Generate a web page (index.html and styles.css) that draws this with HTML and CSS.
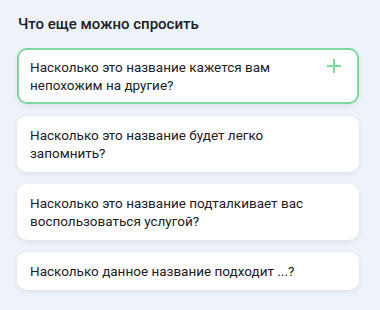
FILE: index.html
```html
<!DOCTYPE html>
<html lang="ru">
<head>
<meta charset="utf-8">
<link rel="stylesheet" href="styles.css">
</head>
<body>
<div class="panel">
  <h2 class="title">Что еще можно спросить</h2>
  <div class="list">
    <div class="card active">
      <span class="text">Насколько это название кажется вам непохожим на другие?</span>
      <svg class="plus" width="14" height="14" viewBox="0 0 14 14"><path d="M7 0v14M0 7h14" stroke="#7dd89b" stroke-width="2" fill="none"/></svg>
    </div>
    <div class="card"><span class="text">Насколько это название будет легко запомнить?</span></div>
    <div class="card"><span class="text">Насколько это название подталкивает вас воспользоваться услугой?</span></div>
    <div class="card"><span class="text">Насколько данное название подходит ...?</span></div>
  </div>
</div>
</body>
</html>
```
FILE: styles.css
```css
html, body {
  margin: 0;
  padding: 0;
  background: #eef2f9;
}
.panel {
  width: 380px;
  height: 310px;
  box-sizing: border-box;
  padding: 15px 21px 0 17px;
  font-family: Roboto, "Noto Sans", sans-serif;
  color: #21201f;
}
.title {
  margin: 0 0 14px 1px;
  font-size: 15px;
  font-weight: 500;
  line-height: 19px;
}
.list {
  display: flex;
  flex-direction: column;
  gap: 12px;
}
.card {
  position: relative;
  background: #fff;
  border-radius: 10px;
  box-shadow: 0 2px 5px rgba(0, 20, 60, 0.08);
  padding: 10px 50px 10px 13px;
  font-size: 13.5px;
  line-height: 18px;
}
.card.active {
  border: 2px solid #7dd89b;
  padding: 8px 48px 8px 11px;
}
.plus {
  position: absolute;
  right: 16px;
  top: 9px;
}
```
